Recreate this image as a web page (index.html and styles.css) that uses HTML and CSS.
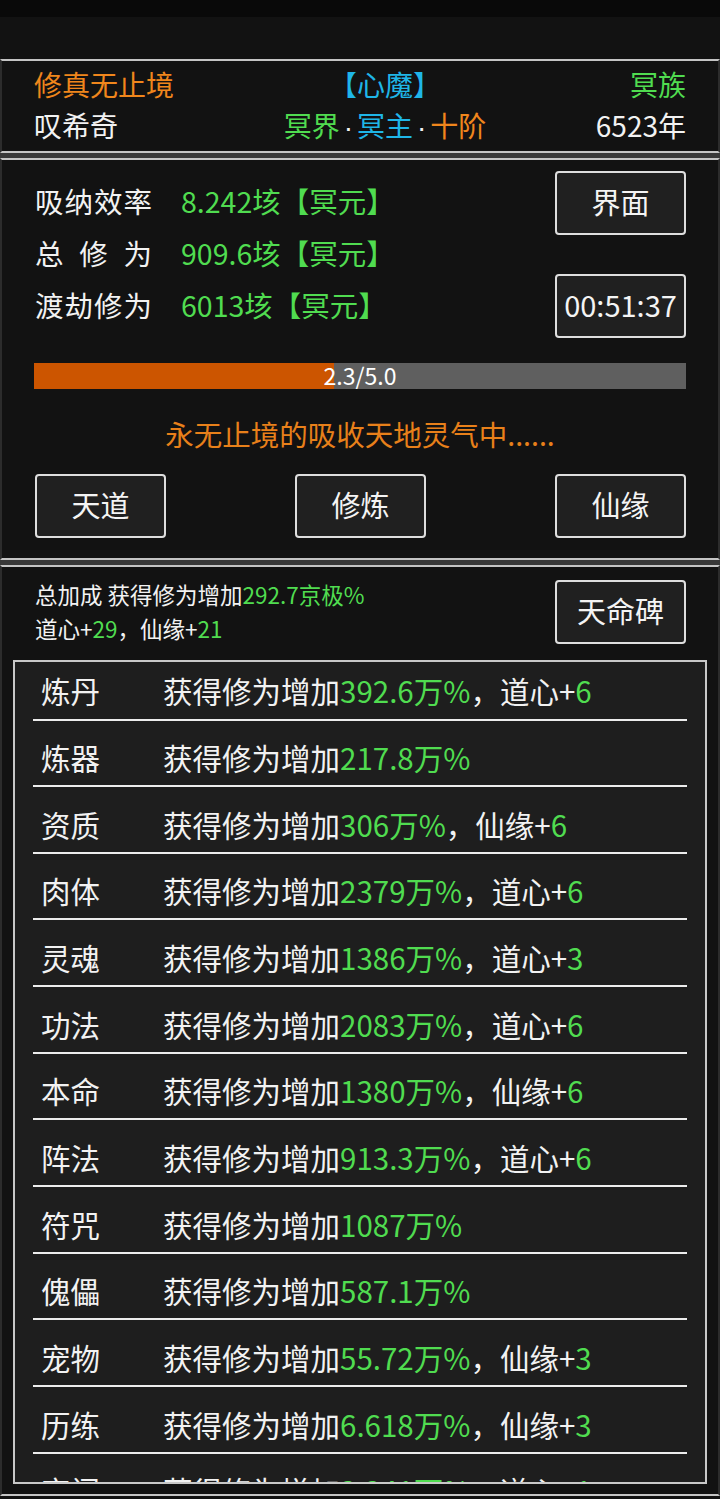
FILE: index.html
```html
<!DOCTYPE html>
<html lang="zh-CN">
<head>
<meta charset="utf-8">
<title>修真无止境</title>
<link rel="stylesheet" href="styles.css">
</head>
<body>
<div class="screen">
  <div class="statusbar"></div>
  <div class="topgap"></div>

  <section class="panel info">
    <div class="info-row">
      <span class="orange">修真无止境</span>
      <span class="center cyan">【心魔】</span>
      <span class="right green">冥族</span>
    </div>
    <div class="info-row">
      <span class="white">叹希奇</span>
      <span class="center"><span class="green">冥界</span><span class="dot">·</span><span class="cyan">冥主</span><span class="dot">·</span><span class="orange">十阶</span></span>
      <span class="right white">6523年</span>
    </div>
  </section>

  <div class="band"></div>

  <section class="panel main">
    <div class="stats-area">
      <div class="stats">
        <div class="stat"><span class="stat-label">吸纳效率</span><span class="green">8.242垓【冥元】</span></div>
        <div class="stat"><span class="stat-label">总修为</span><span class="green">909.6垓【冥元】</span></div>
        <div class="stat"><span class="stat-label">渡劫修为</span><span class="green">6013垓【冥元】</span></div>
      </div>
      <div class="side-buttons">
        <div class="btn">界面</div>
        <div class="btn">00:51:37</div>
      </div>
    </div>
    <div class="progress">
      <div class="progress-fill" style="width: 46%"></div>
      <span class="progress-text">2.3/5.0</span>
    </div>
    <div class="message">永无止境的吸收天地灵气中......</div>
    <div class="action-row">
      <div class="btn">天道</div>
      <div class="btn">修炼</div>
      <div class="btn">仙缘</div>
    </div>
  </section>

  <div class="band"></div>

  <section class="panel bonus">
    <div class="bonus-head">
      <div class="bonus-text">
        <div>总加成 获得修为增加<span class="green">292.7京极%</span></div>
        <div>道心+<span class="green">29</span>，仙缘+<span class="green">21</span></div>
      </div>
      <div class="btn">天命碑</div>
    </div>
    <div class="list">
      <div class="row"><span class="row-name">炼丹</span><span>获得修为增加<span class="green">392.6万%</span>，道心+<span class="green">6</span></span></div>
      <div class="row"><span class="row-name">炼器</span><span>获得修为增加<span class="green">217.8万%</span></span></div>
      <div class="row"><span class="row-name">资质</span><span>获得修为增加<span class="green">306万%</span>，仙缘+<span class="green">6</span></span></div>
      <div class="row"><span class="row-name">肉体</span><span>获得修为增加<span class="green">2379万%</span>，道心+<span class="green">6</span></span></div>
      <div class="row"><span class="row-name">灵魂</span><span>获得修为增加<span class="green">1386万%</span>，道心+<span class="green">3</span></span></div>
      <div class="row"><span class="row-name">功法</span><span>获得修为增加<span class="green">2083万%</span>，道心+<span class="green">6</span></span></div>
      <div class="row"><span class="row-name">本命</span><span>获得修为增加<span class="green">1380万%</span>，仙缘+<span class="green">6</span></span></div>
      <div class="row"><span class="row-name">阵法</span><span>获得修为增加<span class="green">913.3万%</span>，道心+<span class="green">6</span></span></div>
      <div class="row"><span class="row-name">符咒</span><span>获得修为增加<span class="green">1087万%</span></span></div>
      <div class="row"><span class="row-name">傀儡</span><span>获得修为增加<span class="green">587.1万%</span></span></div>
      <div class="row"><span class="row-name">宠物</span><span>获得修为增加<span class="green">55.72万%</span>，仙缘+<span class="green">3</span></span></div>
      <div class="row"><span class="row-name">历练</span><span>获得修为增加<span class="green">6.618万%</span>，仙缘+<span class="green">3</span></span></div>
      <div class="row"><span class="row-name">宗门</span><span>获得修为增加<span class="green">3.341万%</span>，道心+<span class="green">1</span></span></div>
    </div>
  </section>
</div>
</body>
</html>
```

FILE: styles.css
```css
* {
  box-sizing: border-box;
}

html, body {
  margin: 0;
  padding: 0;
  background: #121212;
}

body {
  font-family: "Noto Sans CJK SC", "Noto Sans", sans-serif;
  color: #f2f2f2;
}

.screen {
  width: 720px;
  height: 1499px;
  overflow: hidden;
  background: #121212;
}

.statusbar {
  height: 17px;
  background: #090909;
}

.topgap {
  height: 42px;
}

/* colours */
.orange { color: #f0861c; }
.cyan { color: #1fb6e8; }
.green { color: #50dc50; }
.white { color: #f2f2f2; }

.panel {
  border: 2px solid #c4c4c4;
  border-left-color: #2c2c2c;
  border-right-color: #2c2c2c;
  background: #121212;
}

.band {
  height: 5px;
  background: #383838;
}

/* header panel */
.info {
  padding: 3px 32px 0;
  height: 94px;
}

.info-row {
  display: grid;
  grid-template-columns: 200px 1fr 150px;
  height: 41px;
  line-height: 41px;
  font-size: 28px;
  white-space: nowrap;
}

.info-row .center {
  text-align: center;
}

.info-row .right {
  text-align: right;
}

.dot {
  font-family: "Liberation Sans", sans-serif;
  color: #f2f2f2;
  padding: 0 4px;
}

/* cultivation panel */
.main {
  height: 402px;
  padding: 11px 32px 0;
}

.stats-area {
  display: flex;
  justify-content: space-between;
  align-items: center;
}

.stats {
  padding: 0 0 4px 1px;
}

.stat {
  display: flex;
  height: 52px;
  line-height: 52px;
  font-size: 28.5px;
  white-space: nowrap;
}

.stat-label {
  width: 117px;
  margin-right: 29px;
  text-align: justify;
  text-align-last: justify;
  color: #f2f2f2;
}

.side-buttons {
  display: flex;
  flex-direction: column;
  gap: 39px;
}

.btn {
  width: 131px;
  height: 64px;
  padding-bottom: 4px;
  border: 2px solid #dedede;
  border-radius: 4px;
  background: #202020;
  color: #f4f4f4;
  font-size: 29px;
  display: flex;
  align-items: center;
  justify-content: center;
  white-space: nowrap;
}

.progress {
  position: relative;
  margin-top: 25px;
  height: 26px;
  background: #5f5f5f;
}

.progress-fill {
  height: 100%;
  background: #cc5500;
}

.progress-text {
  position: absolute;
  inset: 0;
  text-align: center;
  line-height: 25px;
  font-size: 23px;
  color: #ffffff;
}

.message {
  margin-top: 25px;
  height: 40px;
  line-height: 40px;
  text-align: center;
  font-size: 28.5px;
  color: #e8801a;
}

.action-row {
  margin-top: 20px;
  display: flex;
  justify-content: space-between;
  padding-left: 1px;
}

/* bonus panel */
.bonus {
  height: 931px;
  padding: 12px 11px 0;
}

.bonus-head {
  display: flex;
  justify-content: space-between;
  align-items: flex-start;
  padding: 0 21px 0 22px;
}

.bonus-head .btn {
  margin-top: 1px;
}

.bonus-text {
  font-size: 22.5px;
  line-height: 34px;
  white-space: nowrap;
  margin-top: -2px;
}

.list {
  margin-top: 15px;
  height: 824px;
  overflow: hidden;
  border: 2px solid #c8c8c8;
  background: #1e1e1e;
  padding: 0 18px;
}

.row {
  display: flex;
  height: 66.67px;
  padding: 16.67px 0 0 8px;
  line-height: 40px;
  font-size: 29.5px;
  border-bottom: 2px solid #ececec;
  white-space: nowrap;
}

.row:first-child {
  height: 58.5px;
  padding-top: 8px;
}

.row-name {
  width: 122px;
  flex: none;
}
```
